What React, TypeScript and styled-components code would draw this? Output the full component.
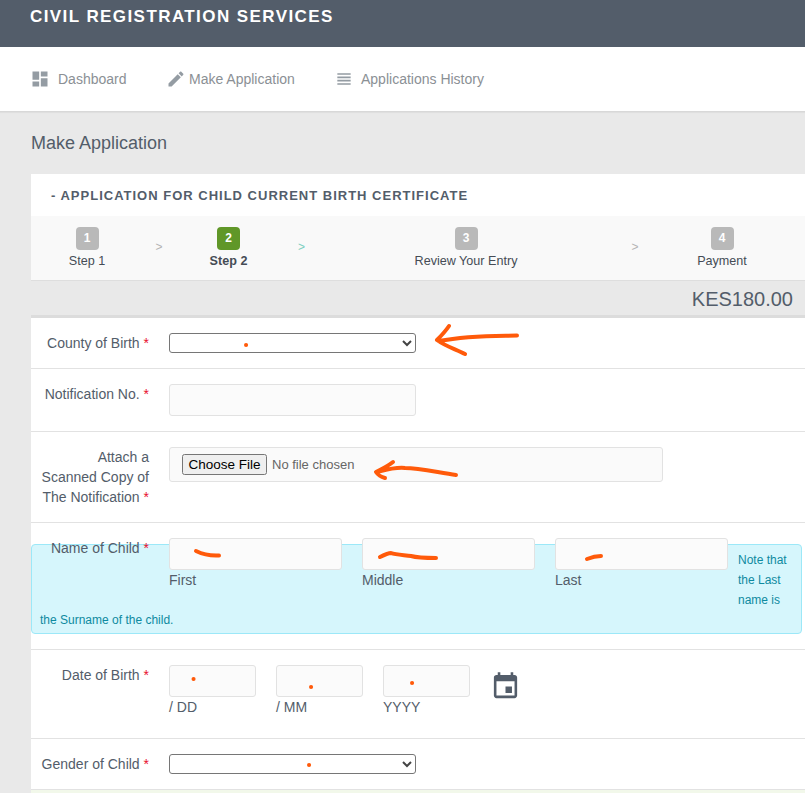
import React from "react";
import styled, { createGlobalStyle } from "styled-components";

const Global = createGlobalStyle`
  html, body { margin: 0; padding: 0; height: 793px; overflow: hidden; background: #e9e9e9; }
  body { font-family: "Liberation Sans", Arial, sans-serif; font-size: 14px; color: #535d6a; }
  * { box-sizing: border-box; }
`;

const Page = styled.div`
  position: relative;
  width: 805px;
  height: 793px;
  overflow: hidden;
`;
const Header = styled.header`
  height: 47px;
  background: #535d6a;
  padding: 7px 30px 0;
  color: #fff;
  font-size: 17px;
  font-weight: 700;
  letter-spacing: 1.42px;
  line-height: 20px;
`;
const Nav = styled.nav`
  height: 65px;
  background: #fff;
  border-bottom: 1px solid #d8d8d8;
  box-shadow: 0 1px 1px rgba(0, 0, 0, 0.04);
  display: flex;
  align-items: center;
  padding: 0 0 1px 30px;
`;
const NavItem = styled.a<{ $w: number; $gap: number }>`
  display: flex;
  align-items: center;
  width: ${(p) => p.$w}px;
  gap: ${(p) => p.$gap}px;
  color: #8b9095;
  font-size: 14px;
  svg { fill: #949ca3; flex: none; }
`;
const PageTitle = styled.h1`
  margin: 0;
  padding: 21px 0 0 31px;
  height: 62px;
  font-size: 18px;
  font-weight: 400;
  line-height: 21px;
  color: #535d6a;
`;
const Card = styled.section`
  margin-left: 31px;
  background: #fff;
`;
const CardTitle = styled.h2`
  margin: 0;
  height: 42px;
  padding: 14px 20px 0;
  font-size: 13px;
  line-height: 15px;
  font-weight: 700;
  letter-spacing: 1px;
  color: #535d6a;
`;
const Steps = styled.div`
  height: 65px;
  background: #f9f9f9;
  border-bottom: 1px solid #dedede;
  display: grid;
  grid-template-columns: 112px 32px 107px 39px 290px 48px 126px;
  padding-top: 11px;
`;
const Step = styled.div<{ $active?: boolean }>`
  display: flex;
  flex-direction: column;
  align-items: center;
  gap: 3px;
  font-size: 12.6px;
  line-height: 17px;
  color: #454c55;
  font-weight: ${(p) => (p.$active ? 700 : 400)};
`;
const Badge = styled.span<{ $active?: boolean }>`
  width: 23px;
  height: 23px;
  border-radius: 4px;
  background: ${(p) => (p.$active ? "#609728" : "#b9b9b9")};
  color: #fff;
  font-size: 12px;
  font-weight: 700;
  line-height: 22px;
  text-align: center;
`;
const Chevron = styled.span<{ $teal?: boolean }>`
  text-align: center;
  font-size: 12px;
  line-height: 14px;
  padding-top: 13px;
  color: ${(p) => (p.$teal ? "#7ccfc0" : "#b4b4b4")};
`;
const Price = styled.div`
  height: 37px;
  background: #e9e9e9;
  border-bottom: 3px solid #dcdcdc;
  text-align: right;
  padding: 7px 12px 0 0;
  font-size: 20px;
  line-height: 23px;
  color: #535d6a;
`;
const Row = styled.div<{ $h: number; $top: number }>`
  height: ${(p) => p.$h}px;
  padding-top: ${(p) => p.$top}px;
  border-bottom: 1px solid #e2e2e2;
  display: grid;
  grid-template-columns: 118px 1fr;
  column-gap: 20px;
  align-items: start;
`;
const Label = styled.label`
  display: block;
  text-align: right;
  font-size: 14px;
  line-height: 20px;
  color: #535d6a;
`;
const Req = styled.span`
  color: #e8112d;
`;
const NativeSelect = styled.select`
  display: block;
  width: 247px;
  height: 20px;
  background: #fff;
  border: 1px solid #767676;
  border-radius: 3px;
  color: #444;
  font-size: 13px;
`;
const TextInput = styled.input<{ $w?: number }>`
  display: block;
  width: ${(p) => (p.$w ? `${p.$w}px` : "100%")};
  height: 32px;
  background: #fbfbfb;
  border: 1px solid #e2e2e2;
  border-radius: 3px;
  outline: none;
`;
const FileBox = styled.div`
  width: 494px;
  height: 35px;
  background: #fafafa;
  border: 1px solid #e2e2e2;
  border-radius: 3px;
  padding: 0 12px 1px;
  display: flex;
  align-items: center;
`;
const FileInput = styled.input`
  font-family: "Liberation Sans", Arial, sans-serif;
  font-size: 13px;
  color: #666;
  width: 300px;
  &::file-selector-button {
    font-family: "Liberation Sans", Arial, sans-serif;
    font-size: 13.5px;
    height: 21px;
    width: 85px;
    padding: 0;
    margin-right: 5px;
    color: #000;
  }
`;
const NameRow = styled.div`
  height: 127px;
  border-bottom: 1px solid #e2e2e2;
  padding-top: 21px;
`;
const Alert = styled.div`
  width: 771px;
  height: 90px;
  background: #d6f6fc;
  border: 1px solid #9ce8f8;
  border-radius: 4px;
  padding: 5px 8px 3px;
  font-size: 12px;
  line-height: 20px;
  color: #0e8a9f;
`;
const NameFields = styled.div`
  float: left;
  width: 707px;
  height: 70px;
  margin: -12px 0 0 -9px;
  display: grid;
  grid-template-columns: 118px 173px 173px 173px;
  column-gap: 20px;
`;
const Field = styled.div`
  display: flex;
  flex-direction: column;
`;
const Hint = styled.span`
  font-size: 14px;
  line-height: 20px;
  color: #535d6a;
`;
const DateFields = styled.div`
  display: flex;
  gap: 20px;
`;
const DateField = styled.div`
  width: 87px;
  display: flex;
  flex-direction: column;
`;
const CalendarIcon = styled.svg`
  width: 31px;
  height: 31px;
  margin: 6px 0 0 0;
  fill: #535d6a;
`;
const Footer = styled.div`
  height: 10px;
  background: #f2f8ea;
`;
const Scribbles = styled.svg`
  position: absolute;
  left: 0;
  top: 0;
  pointer-events: none;
  fill: none;
  stroke: #ff5a0a;
  stroke-linecap: round;
  stroke-linejoin: round;
`;

const Icon = ({ d, s = 18 }: { d: string; s?: number }) => (
  <svg width={s} height={s} viewBox="0 0 24 24"><path d={d} /></svg>
);

export default function App() {
  return (
    <Page>
      <Global />
      <Header>CIVIL REGISTRATION SERVICES</Header>
      <Nav>
        <NavItem $w={136} $gap={8}>
          <Icon d="M3 13h8V3H3v10zm0 8h8v-6H3v6zm10 0h8V11h-8v10zm0-18v6h8V3h-8z" s={20} />Dashboard
        </NavItem>
        <NavItem $w={168} $gap={3}>
          <Icon d="M3 17.25V21h3.75L17.81 9.94l-3.75-3.75L3 17.25zM20.71 7.04c.39-.39.39-1.02 0-1.41l-2.34-2.34c-.39-.39-1.02-.39-1.41 0l-1.83 1.83 3.75 3.75 1.83-1.83z" s={20} />Make Application
        </NavItem>
        <NavItem $w={170} $gap={7}>
          <Icon d="M4 15h16v-2H4v2zm0 4h16v-2H4v2zm0-8h16V9H4v2zm0-6v2h16V5H4z" s={20} />Applications History
        </NavItem>
      </Nav>
      <PageTitle>Make Application</PageTitle>
      <Card>
        <CardTitle>- APPLICATION FOR CHILD CURRENT BIRTH CERTIFICATE</CardTitle>
        <Steps>
          <Step><Badge>1</Badge>Step 1</Step>
          <Chevron>&gt;</Chevron>
          <Step $active><Badge $active>2</Badge>Step 2</Step>
          <Chevron $teal>&gt;</Chevron>
          <Step><Badge>3</Badge>Review Your Entry</Step>
          <Chevron>&gt;</Chevron>
          <Step><Badge>4</Badge>Payment</Step>
        </Steps>
        <Price>KES180.00</Price>
        <Row $h={51} $top={15}>
          <Label>County of Birth <Req>*</Req></Label>
          <NativeSelect />
        </Row>
        <Row $h={63} $top={15}>
          <Label>Notification No. <Req>*</Req></Label>
          <TextInput $w={247} />
        </Row>
        <Row $h={91} $top={15}>
          <Label>Attach a<br />Scanned Copy of<br />The Notification <Req>*</Req></Label>
          <FileBox><FileInput type="file" /></FileBox>
        </Row>
        <NameRow>
          <Alert>
            <NameFields>
              <Label>Name of Child <Req>*</Req></Label>
              <Field><TextInput /><Hint>First</Hint></Field>
              <Field><TextInput /><Hint>Middle</Hint></Field>
              <Field><TextInput /><Hint>Last</Hint></Field>
            </NameFields>
            Note that the Last name is the Surname of the child.
          </Alert>
        </NameRow>
        <Row $h={89} $top={15}>
          <Label>Date of Birth <Req>*</Req></Label>
          <DateFields>
            <DateField><TextInput /><Hint>/ DD</Hint></DateField>
            <DateField><TextInput /><Hint>/ MM</Hint></DateField>
            <DateField><TextInput /><Hint>YYYY</Hint></DateField>
            <CalendarIcon viewBox="0 0 24 24">
              <path d="M17 12h-5v5h5v-5zM16 1v2H8V1H6v2H5c-1.11 0-1.99.9-1.99 2L3 19c0 1.1.89 2 2 2h14c1.1 0 2-.9 2-2V5c0-1.1-.9-2-2-2h-1V1h-2zm3 18H5V8h14v11z" />
            </CalendarIcon>
          </DateFields>
        </Row>
        <Row $h={51} $top={15}>
          <Label>Gender of Child <Req>*</Req></Label>
          <NativeSelect />
        </Row>
        <Footer />
      </Card>
      <Scribbles width={805} height={793} viewBox="0 0 805 793">
        <path strokeWidth={4} d="M517 335.5 C500 336 470 335 439 341 M449 326 C445 332 441 336 437 340 C445 346 455 349 465 354" />
        <path strokeWidth={4} d="M456 475 C440 473 420 468 405 468 C395 467 385 470 377 472 M393 462 C388 466 382 469 376 472 C378 475 381 477 385 478" />
        <path strokeWidth={4} d="M196 551 C204 555 210 556 219 555.5" />
        <path strokeWidth={4} d="M380 557 C384 555 388 553 391 553 C396 555 405 555 411 556 C418 558 428 558 436 558" />
        <path strokeWidth={4} d="M587 559 C592 557 597 556 601 556" />
        <path strokeWidth={4} d="M246 345h.1 M193.5 679h.1 M311 687h.1 M412 683h.1 M309 765h.1" />
      </Scribbles>
    </Page>
  );
}
